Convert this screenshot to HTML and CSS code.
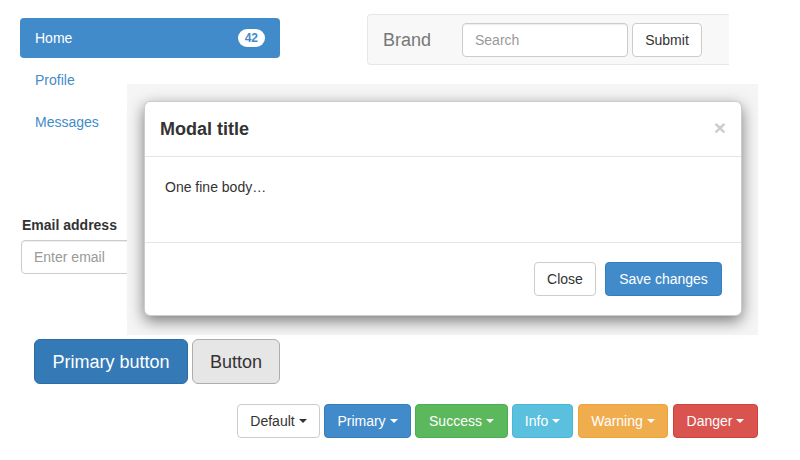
FILE: index.html
```html
<!DOCTYPE html>
<html>
<head>
<meta charset="utf-8">
<link rel="stylesheet" href="styles.css">
</head>
<body>
<div class="page">
  <div class="top-row">
    <ul class="pills">
      <li class="pill active"><span>Home</span><span class="badge">42</span></li>
      <li class="pill"><span>Profile</span></li>
      <li class="pill"><span>Messages</span></li>
    </ul>
    <div class="navbar">
      <span class="brand">Brand</span>
      <input class="form-control search" type="text" placeholder="Search">
      <button class="btn btn-default submit">Submit</button>
    </div>
  </div>

  <div class="form-group">
    <label class="label">Email address</label>
    <input class="form-control email" type="text" placeholder="Enter email">
  </div>

  <div class="lg-row">
    <button class="btn btn-lg btn-primary-dark">Primary button</button>
    <button class="btn btn-lg btn-gray">Button</button>
  </div>

  <div class="dd-row">
    <button class="btn btn-default dd w-default">Default <span class="caret"></span></button>
    <button class="btn btn-primary dd w-primary">Primary <span class="caret"></span></button>
    <button class="btn btn-success dd w-success">Success <span class="caret"></span></button>
    <button class="btn btn-info dd w-info">Info <span class="caret"></span></button>
    <button class="btn btn-warning dd w-warning">Warning <span class="caret"></span></button>
    <button class="btn btn-danger dd w-danger">Danger <span class="caret"></span></button>
  </div>

  <div class="backdrop">
    <div class="modal">
      <div class="modal-header">
        <h4 class="modal-title">Modal title</h4>
        <span class="close">&times;</span>
      </div>
      <div class="modal-body">
        <p>One fine body&hellip;</p>
      </div>
      <div class="modal-footer">
        <button class="btn btn-default w-close">Close</button>
        <button class="btn btn-primary w-save">Save changes</button>
      </div>
    </div>
  </div>
</div>
</body>
</html>
```

FILE: styles.css
```css
* { box-sizing: border-box; }
html, body { margin: 0; padding: 0; background: #fff; }
body {
  font-family: "Liberation Sans", Arial, sans-serif;
  font-size: 14px;
  line-height: 20px;
  color: #333;
}
.page {
  position: relative;
  width: 800px;
  height: 460px;
  overflow: hidden;
}

/* top row */
.top-row {
  display: flex;
  align-items: flex-start;
}
.pills {
  list-style: none;
  margin: 18px 0 0 20px;
  padding: 0;
  width: 260px;
}
.pill {
  display: flex;
  justify-content: space-between;
  align-items: center;
  height: 40px;
  padding: 10px 15px;
  color: #428bca;
  border-radius: 4px;
}
.pill + .pill { margin-top: 2px; }
.pill.active {
  background: #428bca;
  color: #fff;
}
.badge {
  display: inline-block;
  min-width: 10px;
  padding: 0 7px;
  height: 18px;
  line-height: 18px;
  font-size: 12px;
  font-weight: bold;
  color: #428bca;
  background: #fff;
  border-radius: 10px;
  text-align: center;
}

.navbar {
  display: flex;
  align-items: flex-start;
  margin: 14px 0 0 87px;
  width: 362px;
  height: 51px;
  padding-top: 8px;
  background: #f8f8f8;
  border: 1px solid #e7e7e7;
  border-right: 0;
  border-radius: 4px 0 0 4px;
}
.brand {
  flex: none;
  width: 94px;
  padding-left: 15px;
  font-size: 18px;
  line-height: 34px;
  color: #777;
}

.form-control {
  display: block;
  height: 34px;
  padding: 6px 12px;
  font-family: inherit;
  font-size: 14px;
  line-height: 20px;
  color: #555;
  background: #fff;
  border: 1px solid #ccc;
  border-radius: 4px;
  box-shadow: inset 0 1px 1px rgba(0,0,0,.075);
  outline: none;
}
.form-control::placeholder { color: #999; }
.search { width: 166px; flex: none; }
.submit { margin-left: 4px; width: 70px; }

/* form group */
.form-group {
  margin: 73px 0 0 21px;
}
.label {
  display: block;
  margin: 0 0 5px 1px;
  font-weight: bold;
  line-height: 20px;
}
.email { width: 280px; }

/* buttons */
.btn {
  display: inline-flex;
  align-items: center;
  justify-content: center;
  height: 34px;
  padding: 0 12px;
  font-family: inherit;
  font-size: 14px;
  line-height: 20px;
  border: 1px solid transparent;
  border-radius: 4px;
  white-space: nowrap;
  cursor: pointer;
}
.btn-default { color: #333; background: #fff; border-color: #ccc; }
.btn-primary { color: #fff; background: #428bca; border-color: #357ebd; }
.btn-success { color: #fff; background: #5cb85c; border-color: #4cae4c; }
.btn-info    { color: #fff; background: #5bc0de; border-color: #46b8da; }
.btn-warning { color: #fff; background: #f0ad4e; border-color: #eea236; }
.btn-danger  { color: #fff; background: #d9534f; border-color: #d43f3a; }

.lg-row {
  display: flex;
  gap: 4px;
  margin: 65px 0 0 34px;
}
.btn-lg {
  height: 45px;
  padding: 0 16px;
  font-size: 18px;
  border-radius: 6px;
}
.btn-primary-dark {
  width: 154px;
  color: #fff;
  background: #337ab7;
  border-color: #2e6da4;
}
.btn-gray {
  width: 88px;
  color: #333;
  background: #e6e6e6;
  border-color: #adadad;
}

.dd-row {
  display: flex;
  margin: 20px 0 0 237px;
}
.dd-row .btn { margin-right: 4px; }
.dd-row .w-info, .dd-row .w-warning { margin-right: 5px; }
.w-default { width: 83px; }
.w-primary { width: 87px; }
.w-success { width: 93px; }
.w-info    { width: 61px; }
.w-warning { width: 90px; }
.w-danger  { width: 85px; }
.caret {
  display: inline-block;
  width: 0;
  height: 0;
  margin-left: 4px;
  border-top: 4px solid currentColor;
  border-left: 4px solid transparent;
  border-right: 4px solid transparent;
}

/* modal overlay */
.backdrop {
  position: absolute;
  left: 127px;
  top: 84px;
  width: 631px;
  height: 251px;
  background: #f5f5f5;
  padding: 17px 0 0 17px;
}
.modal {
  width: 598px;
  height: 215px;
  background: #fff;
  border: 1px solid rgba(0,0,0,.2);
  border-radius: 6px;
  box-shadow: 0 5px 15px rgba(0,0,0,.5);
  overflow: hidden;
}
.modal-header {
  display: flex;
  justify-content: space-between;
  align-items: center;
  height: 55px;
  padding: 0 15px;
  border-bottom: 1px solid #e5e5e5;
}
.modal-title {
  margin: 0;
  font-size: 18px;
  font-weight: bold;
  line-height: 24px;
  color: #333;
}
.close {
  font-size: 21px;
  font-weight: bold;
  line-height: 20px;
  color: #000;
  opacity: .2;
  margin-top: -3px;
}
.modal-body {
  height: 85px;
  padding: 20px;
}
.modal-body p { margin: 0; }
.modal-footer {
  display: flex;
  justify-content: flex-end;
  padding: 19px 19px 0;
  border-top: 1px solid #e5e5e5;
}
.w-close { width: 62px; }
.w-save { width: 117px; margin-left: 9px; }
```
